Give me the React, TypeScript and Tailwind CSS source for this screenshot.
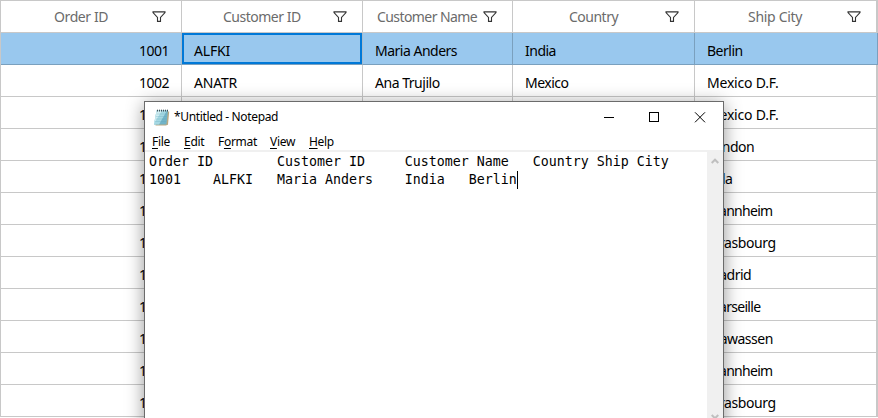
type Column = {
  title: string;
  width: string;
  titleBox: string;
  values: string[];
  align?: string;
};

const columns: Column[] = [
  {
    title: 'Order ID',
    width: 'w-[181px]',
    titleBox: 'pl-[53px] tracking-[-0.4px]',
    align: 'justify-end pr-3',
    values: ['1001', '1002', '1003', '1004', '1005', '1006', '1007', '1008', '1009', '1010', '1011', '1012'],
  },
  {
    title: 'Customer ID',
    width: 'w-[181px]',
    titleBox: 'pl-[41px] tracking-[-0.5px]',
    values: ['ALFKI', 'ANATR', '', '', '', '', '', '', '', '', '', ''],
  },
  {
    title: 'Customer Name',
    width: 'w-[150px]',
    titleBox: 'pl-[14px] tracking-[-0.58px]',
    values: ['Maria Anders', 'Ana Trujilo', '', '', '', '', '', '', '', '', '', ''],
  },
  {
    title: 'Country',
    width: 'w-[182px]',
    titleBox: 'pl-[56px] tracking-[-0.5px]',
    values: ['India', 'Mexico', '', '', '', '', '', '', '', '', '', ''],
  },
  {
    title: 'Ship City',
    width: 'w-[183px]',
    titleBox: 'pl-[53px] tracking-[-0.3px]',
    values: ['Berlin', 'Mexico D.F.', 'Mexico D.F.', 'London', 'Lula', 'Mannheim', 'Strasbourg', 'Madrid', 'Marseille', 'Tsawassen', 'Mannheim', 'Strasbourg'],
  },
];

function spacing(value: string) {
  if (value.includes('D.F.') || value.startsWith('A')) return value.includes(' T') ? 'tracking-[-0.48px]' : 'tracking-[-0.2px]';
  if (value === 'Mannheim' || value === 'Marseille') return 'tracking-[-0.7px]';
  if (value === 'Strasbourg') return 'tracking-[-0.4px]';
  return 'tracking-[-0.5px]';
}

function FilterIcon() {
  return (
    <svg className="h-[12px] w-[14px] shrink-0" viewBox="0 0 14 12" fill="none" stroke="#333" strokeWidth="1.1">
      <path d="M1 1.5V.9H13V1.5L8.5 6.4V10.4H5.5V6.4Z" />
    </svg>
  );
}

function GridColumn({ column, index }: { column: Column; index: number }) {
  const last = index === columns.length - 1;
  return (
    <div className={`${column.width} shrink-0`}>
      <div className={`flex h-8 items-center border-b border-[#c8c8c8] pr-[15px] ${last ? 'border-r-2' : 'border-r'} ${column.titleBox}`}>
        <span className="grow whitespace-nowrap text-[14px] leading-8 text-[#6b6b6b]">{column.title}</span>
        <FilterIcon />
      </div>
      {column.values.map((value, row) => {
        const selected = row === 0;
        const current = selected && index === 1;
        const rule = selected
          ? `bg-[#99c8ee] border-r border-b-[#7aa0be] ${index < 2 ? 'border-r-[#a9bccb]' : 'border-r-[#7aa0be]'}`
          : `border-[#c8c8c8] ${last ? 'border-r-2' : 'border-r'}`;
        return (
          <div
            key={row}
            className={`flex h-8 items-center border-b ${rule} ${column.align ?? 'pl-3'} ${current ? 'shadow-[inset_0_0_0_2px_#0078d7]' : ''}`}
          >
            <span className={`mt-[5px] whitespace-nowrap text-[14px] leading-5 text-black ${spacing(value)}`}>{value}</span>
          </div>
        );
      })}
    </div>
  );
}

function NotepadIcon() {
  return (
    <svg className="h-[17px] w-[17px]" viewBox="0 0 17 17">
      <path d="M4 2.5H16.2L15 15.8L12.8 16.5H2.5Z" fill="#b9a983" />
      <path d="M3.6 1.5H15L13.4 15.6H1Z" fill="#72b4c8" />
      <path d="M3.6 1.5H14L6 15.6H1Z" fill="#a5d8e3" />
      <path d="M3.6 1.5H9L2.5 12L1 15.6Z" fill="#cfedf2" />
      <path d="M3.4 5H13.8M3 7.5H13.5M2.5 10H13.2M2 12.5H12.9" stroke="#5d9fb5" strokeOpacity=".5" strokeWidth=".5" />
      <path d="M4.5 .7V2.5M6.5 .7V2.5M8.5 .7V2.5M10.5 .7V2.5M12.5 .7V2.5M14.5 .7V2.5" stroke="#3f5058" strokeWidth="1" />
    </svg>
  );
}

const menus = [
  { before: '', key: 'F', after: 'ile', width: 'w-[32px]' },
  { before: '', key: 'E', after: 'dit', width: 'w-[34px]' },
  { before: 'F', key: 'o', after: 'rmat', width: 'w-[52px]' },
  { before: '', key: 'V', after: 'iew', width: 'w-[39px]' },
  { before: '', key: 'H', after: 'elp', width: 'w-[40px]' },
];

function Notepad() {
  return (
    <div className="absolute left-[144px] top-[101px] flex h-[330px] w-[580px] flex-col border border-[#6b6b6b] bg-white shadow-[0_3px_17px_rgba(0,0,0,0.42)]">
      <div className="flex h-[30px] shrink-0 items-center pl-2">
        <NotepadIcon />
        <span className="ml-1 grow text-[12px] tracking-[-0.36px] text-black">*Untitled - Notepad</span>
        <svg className="mr-[16px] h-[11px] w-[103px]" viewBox="0 0 103 11" fill="none" stroke="#000" shapeRendering="crispEdges">
          <path d="M0 5.5H10M45.5 .5H54.5V9.5H45.5Z" />
          <path d="M91 .3L101 10.3M101 .3L91 10.3" shapeRendering="auto" />
        </svg>
      </div>
      <div className="flex h-[20px] shrink-0 items-center border-b-2 border-[#f0f0f0] pl-[7px] pt-[2px] text-[12px] leading-4 tracking-[-0.3px] text-black">
        {menus.map((menu) => (
          <span key={menu.key} className={`${menu.width} whitespace-nowrap`}>
            {menu.before}
            <span className="underline underline-offset-2">{menu.key}</span>
            {menu.after}
          </span>
        ))}
      </div>
      <div className="flex min-h-0 grow">
        <div className="grow whitespace-pre pl-1 pt-px font-['DejaVu_Sans_Mono',monospace] text-[13.29px] leading-[18px] text-black">
          <div>{'Order ID        Customer ID     Customer Name   Country Ship City'}</div>
          <div className="flex items-center">
            {'1001    ALFKI   Maria Anders    India   Berlin'}
            <span className="h-[18px] w-px bg-black" />
          </div>
        </div>
        <div className="flex w-4 flex-col items-center bg-[#f0f0f0] pt-[6px]">
          <svg className="h-[6px] w-[8px] shrink-0" viewBox="0 0 8 6" fill="none" stroke="#bfbfbf" strokeWidth="2">
            <path d="M.7 5L4 1.7L7.3 5" />
          </svg>
          <svg className="mt-[250px] h-[6px] w-[8px] shrink-0" viewBox="0 0 8 6" fill="none" stroke="#bfbfbf" strokeWidth="2">
            <path d="M.7 1L4 4.3L7.3 1" />
          </svg>
        </div>
      </div>
    </div>
  );
}

export default function App() {
  return (
    <div className="relative h-[418px] w-[878px] overflow-hidden bg-white font-['Noto_Sans','Open_Sans',sans-serif]">
      <div className="flex w-[878px] border-l border-t border-[#c8c8c8]">
        {columns.map((column, index) => (
          <GridColumn key={column.title} column={column} index={index} />
        ))}
      </div>
      <Notepad />
    </div>
  );
}
